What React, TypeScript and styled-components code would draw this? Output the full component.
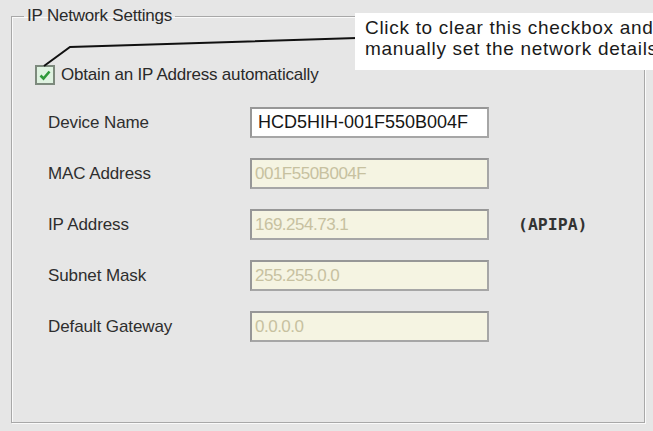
import styled, { createGlobalStyle } from "styled-components"

const GlobalStyle = createGlobalStyle`
  html, body {
    margin: 0;
    padding: 0;
    background: #e6e6e6;
  }
`

type Field = {
  label: string
  value: string
  editable?: boolean
  note?: string
}

const fields: Field[] = [
  { label: "Device Name", value: "HCD5HIH-001F550B004F", editable: true },
  { label: "MAC Address", value: "001F550B004F" },
  { label: "IP Address", value: "169.254.73.1", note: "(APIPA)" },
  { label: "Subnet Mask", value: "255.255.0.0" },
  { label: "Default Gateway", value: "0.0.0.0" },
]

const App = () => {
  return (
    <>
      <GlobalStyle />
      <Page>
        <Group>
          <Legend>IP Network Settings</Legend>
          <Body>
            <CheckRow>
              <CheckBox>
                <svg width="12" height="11" viewBox="0 0 12 11">
                  <path d="M1.5 5.5 L4.5 8.5 L10.5 1.5" fill="none" stroke="#2f9a3a" strokeWidth="2.6" />
                </svg>
              </CheckBox>
              <CheckLabel>Obtain an IP Address automatically</CheckLabel>
            </CheckRow>
            <Form>
              {fields.map((f) => (
                <Row key={f.label}>
                  <Label>{f.label}</Label>
                  <Input $editable={!!f.editable}>{f.value}</Input>
                  {f.note && <Note>{f.note}</Note>}
                </Row>
              ))}
            </Form>
          </Body>
        </Group>

        <Leader width="653" height="431">
          <polyline points="44,66 70,47 357,38" fill="none" stroke="#111" strokeWidth="2" />
        </Leader>
        <Callout>
          Click to clear this checkbox and
          <br />
          manually set the network details
        </Callout>
      </Page>
    </>
  )
}

export default App

const Page = styled.div`
  position: relative;
  width: 653px;
  height: 431px;
  overflow: hidden;
  box-sizing: border-box;
  padding: 7px 8px 0 11px;
  background: #e6e6e6;
`

const Group = styled.fieldset`
  width: 634px;
  height: 416px;
  box-sizing: border-box;
  margin: 0;
  padding: 0;
  border: 1px solid #a8a8a8;
  box-shadow: inset 1px 1px 0 #fafafa, 1px 1px 0 #fafafa;
`

const Legend = styled.legend`
  margin-left: 12px;
  padding: 0 3px;
  font-family: "Liberation Sans", Arial, sans-serif;
  font-size: 17px;
  line-height: 18px;
  color: #2a2a2a;
  letter-spacing: -0.2px;
`

const Body = styled.div`
  padding: 40px 0 0 23px;
`

const CheckRow = styled.div`
  display: flex;
  align-items: center;
  gap: 6px;
  height: 20px;
`

const CheckBox = styled.div`
  width: 20px;
  height: 20px;
  box-sizing: border-box;
  border: 2px solid #7d8a7d;
  background: #dff3e1;
  display: flex;
  align-items: center;
  justify-content: center;
`

const CheckLabel = styled.span`
  font-family: "Liberation Sans", Arial, sans-serif;
  font-size: 17px;
  color: #2a2a2a;
  letter-spacing: -0.2px;
`

const Form = styled.div`
  display: flex;
  flex-direction: column;
  gap: 20px;
  margin-top: 22px;
  padding-left: 13px;
`

const Row = styled.div`
  display: flex;
  align-items: center;
  height: 31px;
`

const Label = styled.span`
  flex: 0 0 202px;
  font-family: "Liberation Sans", Arial, sans-serif;
  font-size: 17px;
  color: #2e2e2e;
  letter-spacing: -0.1px;
`

const Input = styled.div<{ $editable: boolean }>`
  flex: 0 0 239px;
  height: 31px;
  box-sizing: border-box;
  padding: 0 ${({ $editable }) => ($editable ? "6px" : "3px")};
  display: flex;
  align-items: center;
  border: 2px solid #979797;
  border-right-color: #a6a6a6;
  border-bottom-color: #a6a6a6;
  background: ${({ $editable }) => ($editable ? "#ffffff" : "#f5f4e2")};
  color: ${({ $editable }) => ($editable ? "#161616" : "#c7c1a0")};
  font-family: "Liberation Sans", Arial, sans-serif;
  font-size: ${({ $editable }) => ($editable ? "18px" : "17px")};
  letter-spacing: ${({ $editable }) => ($editable ? "0" : "-0.5px")};
`

const Note = styled.span`
  margin-left: 29px;
  font-family: "DejaVu Sans Mono", monospace;
  font-size: 16.5px;
  font-weight: bold;
  color: #333;
`

const Leader = styled.svg`
  position: absolute;
  left: 0;
  top: 0;
  pointer-events: none;
`

/* the note is wider than the window, so its right edge is clipped */
const Callout = styled.div`
  position: absolute;
  left: 355px;
  top: 13px;
  width: 310px;
  height: 57px;
  box-sizing: border-box;
  padding: 4px 0 0 10px;
  background: #ffffff;
  font-family: "Liberation Sans", Arial, sans-serif;
  font-size: 19px;
  line-height: 21px;
  letter-spacing: 0.7px;
  color: #1a1a1a;
  white-space: nowrap;
`
